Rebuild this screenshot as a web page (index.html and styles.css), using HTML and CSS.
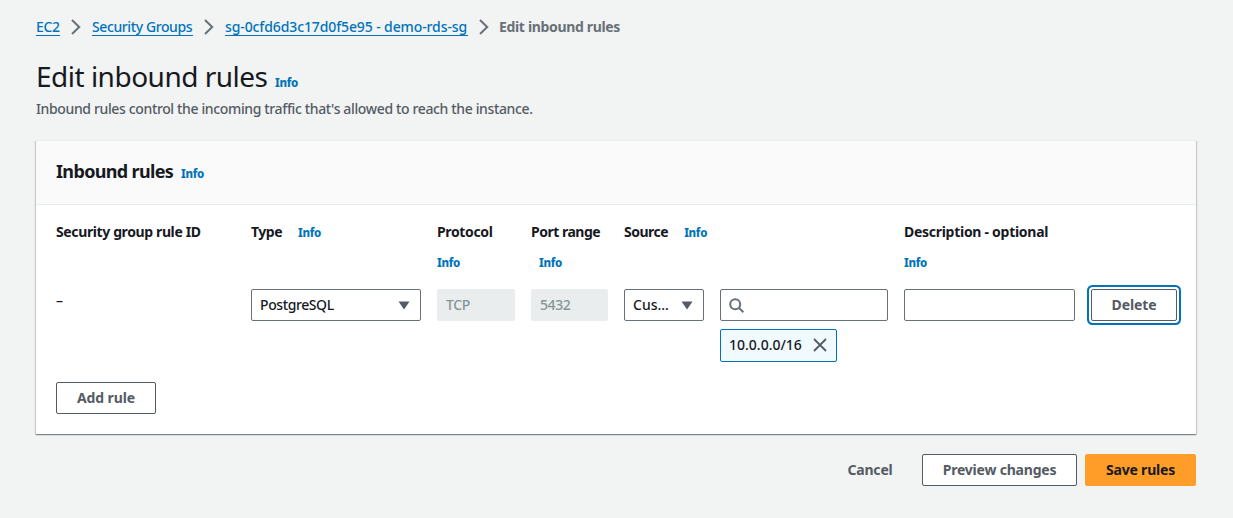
FILE: index.html
```html
<!DOCTYPE html>
<html lang="en">
<head>
<meta charset="utf-8">
<title>Edit inbound rules</title>
<link rel="stylesheet" href="styles.css">
</head>
<body>
<nav class="breadcrumbs">
  <a class="crumb crumb-ec2">EC2</a>
  <svg class="chevron" viewBox="0 0 10 16"><path d="M1 1l7.2 7L1 15"/></svg>
  <a class="crumb crumb-groups">Security Groups</a>
  <svg class="chevron" viewBox="0 0 10 16"><path d="M1 1l7.2 7L1 15"/></svg>
  <a class="crumb crumb-sg">sg-0cfd6d3c17d0f5e95 - demo-rds-sg</a>
  <svg class="chevron" viewBox="0 0 10 16"><path d="M1 1l7.2 7L1 15"/></svg>
  <span class="crumb-current">Edit inbound rules</span>
</nav>
<header class="page-header">
  <div class="title-row"><h1>Edit inbound rules</h1><a class="info">Info</a></div>
  <p>Inbound rules control the incoming traffic that's allowed to reach the instance.</p>
</header>
<section class="panel">
  <div class="panel-header"><h2>Inbound rules</h2><a class="info">Info</a></div>
  <div class="panel-body">
    <div class="grid labels">
      <div class="label rule-label"><span>Security group rule ID</span></div>
      <div class="label"><span>Type</span><a class="info">Info</a></div>
      <div class="label stacked protocol"><span>Protocol</span><a class="info">Info</a></div>
      <div class="label stacked port"><span>Port range</span><a class="info">Info</a></div>
      <div class="label source"><span>Source</span><a class="info">Info</a></div>
      <div class="label stacked description"><span>Description - optional</span><a class="info">Info</a></div>
    </div>
    <div class="grid rule">
      <div class="rule-id">–</div>
      <div class="field select"><span class="postgres">PostgreSQL</span><svg class="caret" viewBox="0 0 12 9"><path d="M.5.5h11L6 8.5z"/></svg></div>
      <div class="field disabled">TCP</div>
      <div class="field disabled">5432</div>
      <div class="field select"><span class="custom">Cus...</span><svg class="caret" viewBox="0 0 12 9"><path d="M.5.5h11L6 8.5z"/></svg></div>
      <div class="source-value">
        <div class="field search"><svg viewBox="0 0 16 16"><circle cx="6.2" cy="6.2" r="5"/><path d="M9.8 9.8l4.6 4.4"/></svg></div>
        <div class="token"><span>10.0.0.0/16</span><svg viewBox="0 0 14 14"><path d="M1 1l12 12M13 1L1 13"/></svg></div>
      </div>
      <div class="field"></div>
      <button class="button delete"><span>Delete</span></button>
    </div>
    <button class="button add"><span>Add rule</span></button>
  </div>
</section>
<footer class="actions">
  <button class="button cancel"><span>Cancel</span></button>
  <button class="button preview"><span>Preview changes</span></button>
  <button class="button save"><span>Save rules</span></button>
</footer>
</body>
</html>
```
FILE: styles.css
```css
* { box-sizing: border-box; }
body {
  margin: 0;
  padding: 17px 37px 0 36px;
  height: 518px;
  background: #f2f3f3;
  color: #16191f;
  font: 14px/20px "Noto Sans", "Open Sans", sans-serif;
  overflow: hidden;
}
h1, h2, p { margin: 0; }
.breadcrumbs { display: flex; align-items: flex-start; height: 20px; white-space: nowrap; }
.crumb { color: #0073bb; height: 19px; border-bottom: 1px solid #0073bb; font-weight: 500; letter-spacing: -0.4px; }
.crumb-ec2 { width: 24px; }
.crumb-groups { width: 101px; }
.crumb-sg { width: 243px; letter-spacing: -0.11px; }
.chevron { width: 10px; height: 16px; margin: 2px 11px; fill: none; stroke: #687078; stroke-width: 2; }
.crumb-current { margin-left: -1px; color: #687078; font-weight: 700; letter-spacing: -0.34px; }
.info { color: #0073bb; font-size: 11.5px; font-weight: 800; letter-spacing: -0.3px; }
.page-header { margin-top: 21px; height: 82px; }
.title-row { display: flex; align-items: baseline; gap: 8px; height: 41px; }
h1 { font-size: 28px; line-height: 36px; font-weight: 400; letter-spacing: -0.5px; width: 231px; white-space: nowrap; }
.page-header p { color: #545b64; font-weight: 500; letter-spacing: -0.36px; white-space: nowrap; }
.panel {
  height: 294px;
  background: #fff;
  box-shadow: 0 1px 1px 0 rgba(0, 28, 36, .3), 1px 1px 1px 0 rgba(0, 28, 36, .15), -1px 1px 1px 0 rgba(0, 28, 36, .15);
}
.panel-header { display: flex; align-items: baseline; gap: 8px; height: 65px; padding: 20px; background: #fafafa; border-top: 1px solid #eaeded; padding-top: 19px; border-bottom: 1px solid #eaeded; }
h2 { font-size: 18px; line-height: 22px; font-weight: 700; letter-spacing: -0.65px; width: 117px; white-space: nowrap; }
.panel-body { padding: 17px 18px 0 20px; }
.grid { display: grid; grid-template-columns: 179px 170px 78px 77px 80px 168px 171px 86px; column-gap: 16px; }
.labels { height: 67px; }
.label { display: flex; gap: 16px; align-items: baseline; white-space: nowrap; font-weight: 700; letter-spacing: -0.5px; }
.rule-label { letter-spacing: -0.38px; }
.stacked { flex-direction: column; gap: 11px; align-items: flex-start; }
.protocol { letter-spacing: -0.35px; }
.port .info { margin-left: 8px; }
.source { grid-column: 5 / 7; }
.description { grid-column: 7 / 9; letter-spacing: -0.28px; }
.rule { height: 93px; align-items: start; }
.rule-id { padding-top: 2px; font-weight: 500; }
.field { height: 32px; padding: 5px 8px; border: 1px solid #687078; border-radius: 2px; background: #fff; font-weight: 500; letter-spacing: -0.4px; }
.select { display: flex; align-items: center; justify-content: space-between; padding-right: 10px; }
.custom { letter-spacing: 0; }
.caret { width: 12px; height: 9px; fill: #545b64; }
.disabled { background: #eaeded; border-color: #eaeded; color: #879596; }
.search { padding-left: 8px; }
.search svg { display: block; width: 16px; height: 16px; margin-top: 3px; fill: none; stroke: #687078; stroke-width: 2; }
.token { display: flex; align-items: center; justify-content: space-between; width: 117px; height: 33px; margin-top: 8px; padding: 0 9px 1px 8px; border: 1px solid #0073bb; border-radius: 2px; background: #f1faff; font-weight: 500; }
.token svg { width: 14px; height: 14px; fill: none; stroke: #545b64; stroke-width: 1.8; }
.button { height: 32px; padding: 0; border: 1px solid #545b64; border-radius: 2px; background: #fff; color: #545b64; font: 700 14px/20px "Noto Sans", "Open Sans", sans-serif; letter-spacing: -0.2px; white-space: nowrap; }
.delete { width: 86px; letter-spacing: -0.1px; box-shadow: 0 0 0 2px #fff, 0 0 0 4px #0073bb; }
.add { display: block; width: 100px; letter-spacing: -0.1px; }
.actions { display: flex; justify-content: flex-end; gap: 8px; margin-top: 20px; }
.cancel { width: 88px; background: transparent; border-color: transparent; }
.preview { width: 155px; }
.save { width: 111px; background: #ff9d28; border-color: #ff9d28; color: #16191f; }
```
